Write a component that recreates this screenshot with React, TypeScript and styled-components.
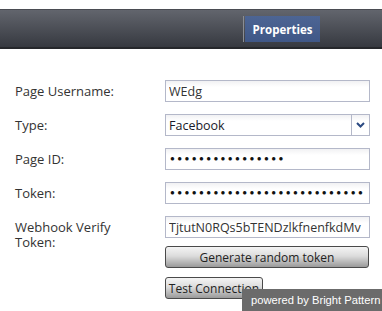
import styled, { createGlobalStyle } from 'styled-components';

const GlobalStyle = createGlobalStyle`
  body {
    margin: 0;
    background: #ffffff;
    font-family: 'Open Sans', 'Noto Sans', sans-serif;
  }
`;

const fields = [
  { label: 'Page Username:', kind: 'text', value: 'WEdg' },
  { label: 'Type:', kind: 'select', value: 'Facebook' },
  { label: 'Page ID:', kind: 'password', value: 16 },
  { label: 'Token:', kind: 'password', value: 27 },
];

const App = () => {
  return (
    <>
      <GlobalStyle />
      <Page>
        <TopBar>
          <Tabs>
            <Separator />
            <Tab>Properties</Tab>
          </Tabs>
        </TopBar>
        <Form>
          {fields.map((f) => (
            <Row key={f.label}>
              <Label>{f.label}</Label>
              {f.kind === 'select' && (
                <SelectBox>
                  <SelectValue>{f.value}</SelectValue>
                  <SelectArrow>
                    <svg width="9" height="6" viewBox="0 0 9 6">
                      <path d="M1 1 L4.5 4.5 L8 1" fill="none" stroke="#2b4a82" strokeWidth="2" />
                    </svg>
                  </SelectArrow>
                </SelectBox>
              )}
              {f.kind === 'password' && <Masked>{'●'.repeat(f.value as number)}</Masked>}
              {f.kind === 'text' && <Field type="text" value={f.value as string} readOnly />}
            </Row>
          ))}
          <Row>
            <Label>
              Webhook Verify
              <br />
              Token:
            </Label>
            <Stack>
              <Field type="text" value="TjtutN0RQs5bTENDzlkfnenfkdMv" readOnly />
              <Button $wide>Generate random token</Button>
              <Button>Test Connection</Button>
            </Stack>
          </Row>
        </Form>
        <PoweredBy>powered by Bright Pattern</PoweredBy>
      </Page>
    </>
  );
};

const Page = styled.div`
  position: relative;
  width: 382px;
  height: 311px;
  overflow: hidden;
  padding-top: 9px;
  box-sizing: border-box;
`;

const TopBar = styled.div`
  height: 37px;
  border-top: 1px solid #4a4c52;
  border-bottom: 2px solid #25272b;
  background: linear-gradient(#62656d, #363940);
  display: flex;
  align-items: center;
  justify-content: flex-end;
  padding-right: 62px;
`;

const Tabs = styled.div`
  display: flex;
  align-items: stretch;
  height: 26px;
  margin-top: 1px;
`;

const Separator = styled.div`
  width: 1px;
  background: #8a8d94;
  margin-right: 1px;
`;

const Tab = styled.div`
  width: 75px;
  display: flex;
  align-items: center;
  justify-content: center;
  background: linear-gradient(#4d6594, #3f5787);
  color: #ffffff;
  font-family: 'Open Sans', sans-serif;
  font-weight: 700;
  font-size: 11.5px;
`;

const Form = styled.div`
  display: flex;
  flex-direction: column;
  gap: 12px;
  padding: 31px 0 0 15px;
`;

const Row = styled.div`
  display: grid;
  grid-template-columns: 150px 205px;
  align-items: start;
`;

const Label = styled.div`
  color: #333333;
  font-size: 13px;
  line-height: 15px;
  padding-top: 4px;
`;

const inputBox = `
  box-sizing: border-box;
  height: 22px;
  width: 205px;
  border: 1px solid #b4b8c9;
  background: linear-gradient(#f1f1f3 0px, #ffffff 6px);
  font-family: 'Open Sans', sans-serif;
  font-size: 12.5px;
  color: #333333;
`;

const Field = styled.input`
  ${inputBox}
  padding: 0 3px;
  outline: none;
`;

const Masked = styled.div`
  ${inputBox}
  padding: 0 0 0 4px;
  overflow: hidden;
  white-space: nowrap;
  font-family: 'Liberation Sans', Arial, sans-serif;
  font-size: 8px;
  letter-spacing: 2.4px;
  line-height: 20px;
  color: #111111;
`;

const SelectBox = styled.div`
  ${inputBox}
  display: flex;
  align-items: stretch;
`;

const SelectValue = styled.div`
  flex: 1;
  display: flex;
  align-items: center;
  padding-left: 3px;
  color: #1a1a2a;
`;

const SelectArrow = styled.div`
  width: 17px;
  border-left: 1px solid #b4b8c9;
  display: flex;
  align-items: center;
  justify-content: center;
`;

const Stack = styled.div`
  display: flex;
  flex-direction: column;
  align-items: flex-start;
  gap: 8px;
`;

const Button = styled.button<{ $wide?: boolean }>`
  box-sizing: border-box;
  height: 22px;
  width: ${(p) => (p.$wide ? '204px' : '98px')};
  padding: 0;
  border: 1px solid #4a4a4a;
  border-radius: 3px;
  background: linear-gradient(#f4f4f4, #dcdcdc 45%, #9a9a9a);
  font-family: 'Open Sans', sans-serif;
  font-size: 12px;
  color: #222222;
  & + & {
    margin-top: 1px;
  }
`;

const PoweredBy = styled.div`
  position: absolute;
  right: 0;
  bottom: 0;
  width: 140px;
  height: 22px;
  box-sizing: border-box;
  padding-left: 9px;
  background: #6b6b6b;
  color: #ffffff;
  font-family: 'Liberation Sans', Arial, sans-serif;
  font-size: 11.2px;
  white-space: nowrap;
  overflow: hidden;
  display: flex;
  align-items: center;
`;

export default App;
